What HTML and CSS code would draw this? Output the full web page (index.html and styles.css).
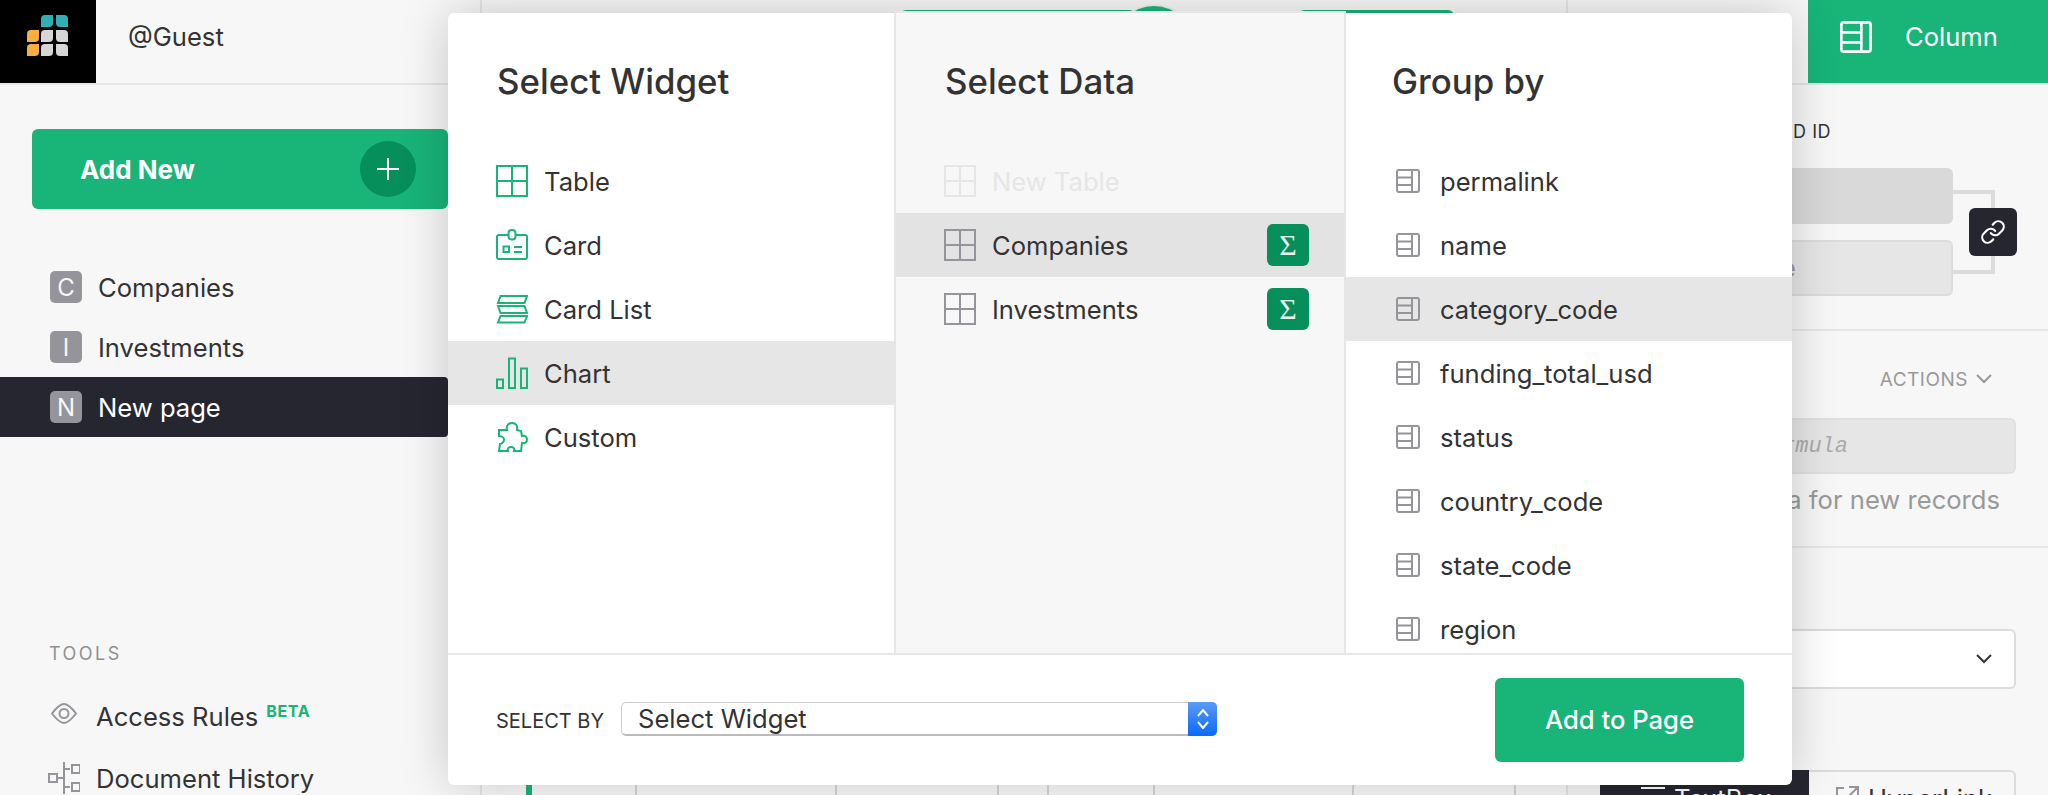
FILE: index.html
```html
<!DOCTYPE html>
<html lang="en">
<head>
  <meta charset="UTF-8">
  <title>New page - Add widget</title>
  <link rel="stylesheet" href="styles.css">
</head>
<body>
  <!-- icons used more than once -->
  <svg class="defs" width="0" height="0">
    <symbol id="i-table" viewBox="0 0 32 32"><path d="M1 1h30v30H1zM16 1v30M1 16h30" fill="none" stroke="currentColor" stroke-width="2"/></symbol>
    <symbol id="i-field" viewBox="0 0 24 24"><rect x="1" y="1" width="22" height="22" rx="2" fill="none" stroke="currentColor" stroke-width="2"/><path d="M16 1v22M1 8.500h15M1 16h15" fill="none" stroke="currentColor" stroke-width="2"/></symbol>
    <symbol id="i-chevron" viewBox="0 0 16 10"><path d="M1 1l7 7 7-7" fill="none" stroke="currentColor" stroke-width="2"/></symbol>
  </svg>

  <div class="app">
    <!-- left sidebar -->
    <aside class="sidebar">
      <div class="side-head">
        <div class="logo">
          <svg width="42" height="42" viewBox="0 0 42 42">
            <path d="M18 0h8v8a4 4 0 0 1-4 4h-8V4a4 4 0 0 1 4-4z" fill="#2fb0b4"/>
            <path d="M29 0h8a4 4 0 0 1 4 4v8h-8a4 4 0 0 1-4-4z" fill="#2fb0b4"/>
            <path d="M4 15h8v8a4 4 0 0 1-4 4H0v-8a4 4 0 0 1 4-4z" fill="#f9ae3f"/>
            <path d="M4 29h8v8a4 4 0 0 1-4 4H0v-8a4 4 0 0 1 4-4z" fill="#f9ae3f"/>
            <path d="M18 15h8v8a4 4 0 0 1-4 4h-8v-8a4 4 0 0 1 4-4z" fill="#d6d6d6"/>
            <path d="M29 15h8a4 4 0 0 1 4 4v8h-8a4 4 0 0 1-4-4z" fill="#d6d6d6"/>
            <path d="M18 29h8v8a4 4 0 0 1-4 4h-8v-8a4 4 0 0 1 4-4z" fill="#d6d6d6"/>
            <path d="M29 29h8a4 4 0 0 1 4 4v8h-8a4 4 0 0 1-4-4z" fill="#d6d6d6"/>
          </svg>
        </div>
        <span class="guest">@Guest</span>
      </div>

      <div class="add-new">
        <span>Add New</span>
        <span class="add-circle">
          <svg width="22" height="22" viewBox="0 0 22 22"><path d="M11 0v22M0 11h22" stroke="#fff" stroke-width="2"/></svg>
        </span>
      </div>

      <ul class="pages">
        <li class="page"><span class="page-badge">C</span>Companies</li>
        <li class="page"><span class="page-badge">I</span>Investments</li>
        <li class="page page-active"><span class="page-badge">N</span>New page</li>
      </ul>

      <div class="tools-label">TOOLS</div>
      <div class="tool">
        <span class="tool-icon tool-eye">
          <svg width="26" height="21" viewBox="0 0 26 21" fill="none" stroke="#94949a" stroke-width="2"><path d="M1 10.500C6 4 10 1 13 1s7 3 12 9.500C20 17 16 20 13 20s-7-3-12-9.500z"/><circle cx="13" cy="10.500" r="4.500"/></svg>
        </span>
        <span>Access Rules</span>
        <span class="beta">BETA</span>
      </div>
      <div class="tool">
        <span class="tool-icon">
          <svg width="32" height="32" viewBox="0 0 32 32" fill="none" stroke="#94949a" stroke-width="2"><path d="M1 12h8v8H1zM24 3h8v8h-8zM24 21h8v8h-8zM16 0v32M9 16h7M16 7h6M16 25h6"/></svg>
        </span>
        <span>Document History</span>
      </div>
    </aside>

    <!-- page canvas, mostly under the dialog -->
    <main class="canvas">
      <div class="canvas-top">
        <div class="green-btn green-btn-wide"></div>
        <div class="green-dot"></div>
        <div class="green-btn green-btn-small"></div>
      </div>
      <div class="grid-row">
        <div class="cell cell-a"><i class="cell-mark"></i></div>
        <div class="cell cell-b"></div>
        <div class="cell cell-c"></div>
        <div class="cell cell-d"></div>
        <div class="cell cell-e"></div>
        <div class="cell cell-f"></div>
        <div class="cell cell-g"></div>
        <div class="cell cell-h"></div>
      </div>
    </main>

    <!-- right panel -->
    <aside class="panel">
      <div class="panel-head">
        <div class="column-tab">
          <svg class="column-icon" width="32" height="32"><use href="#i-field"/></svg>
          Column
        </div>
      </div>

      <section class="panel-sec sec-fields">
        <div class="sec-label">RECORD ID</div>
        <div class="link-group">
          <div class="field field-filled"></div>
          <div class="field field-plain">Table name</div>
          <div class="link-lines"></div>
          <div class="link-btn">
            <svg width="26" height="26" viewBox="0 0 24 24" fill="none" stroke="#fff" stroke-width="2" stroke-linecap="round"><path d="M10 13a5 5 0 0 0 7.540.54l3-3a5 5 0 0 0-7.070-7.070l-1.720 1.710"/><path d="M14 11a5 5 0 0 0-7.540-.54l-3 3a5 5 0 0 0 7.070 7.070l1.710-1.710"/></svg>
          </div>
        </div>
      </section>

      <section class="panel-sec sec-formula">
        <div class="actions">ACTIONS <svg class="chev" width="16" height="10"><use href="#i-chevron"/></svg></div>
        <div class="formula">Enter formula</div>
        <div class="formula-note">Set formula for new records</div>
      </section>

      <section class="sec-bottom">
        <div class="panel-select"><svg class="chev-dark" width="16" height="10"><use href="#i-chevron"/></svg></div>
        <div class="tabs">
          <div class="tab tab-on"><i class="tab-dash"></i>TextBox</div>
          <div class="tab">
            <svg class="tab-link" width="24" height="24" viewBox="0 0 24 24" fill="none" stroke="#94949a" stroke-width="2"><path d="M9 2H2v20h20v-8M14 1h9v9M23 1L11 13"/></svg>
            HyperLink
          </div>
        </div>
      </section>
    </aside>
  </div>

  <!-- add widget dialog -->
  <div class="modal">
    <div class="modal-cols">
      <div class="col">
        <h2 class="col-title">Select Widget</h2>
        <ul class="rows">
          <li class="row">
            <svg class="wicon" width="32" height="32"><use href="#i-table"/></svg>Table
          </li>
          <li class="row">
            <svg class="wicon" width="32" height="32" viewBox="0 0 32 32" fill="none" stroke="currentColor" stroke-width="2"><path d="M12 6H3a2 2 0 0 0-2 2v20a2 2 0 0 0 2 2h26a2 2 0 0 0 2-2V8a2 2 0 0 0-2-2h-9"/><rect x="12.500" y="1" width="7" height="9.500" rx="3"/><path d="M7.500 17.500h5.500v5.500H7.500zM18 18h8M18 23h8"/></svg>Card
          </li>
          <li class="row">
            <svg class="wicon" width="32" height="32" viewBox="0 0 32 32" fill="none" stroke="currentColor" stroke-width="2"><path d="M4.500 3H31l-2.500 7H2zM2 13h26.500l2.500 7H4.500zM4.500 23H31l-2.500 6.500H2z"/></svg>Card List
          </li>
          <li class="row row-on">
            <svg class="wicon" width="32" height="32" viewBox="0 0 32 32" fill="none" stroke="currentColor" stroke-width="2"><path d="M1 22.500h6V31H1zM13 1.500h6V31h-6zM25 11.500h6V31h-6z"/></svg>Chart
          </li>
          <li class="row">
            <svg class="wicon" width="32" height="32" viewBox="0 0 32 32" fill="none" stroke="currentColor" stroke-width="2"><path d="M3 9h8c-1-4 1-7 5-7s6 3 5 7l4 1 1 5c3-1 5 1 5 3.500S29 23 26 22l-1 8h-7c1-3-1-4-3-4s-4 1-3 4H3l1-7c2 0 4-2 4-4.500S5 15 3 15z"/></svg>Custom
          </li>
        </ul>
      </div>

      <div class="col col-mid">
        <h2 class="col-title">Select Data</h2>
        <ul class="rows">
          <li class="row row-off">
            <svg class="dicon" width="32" height="32"><use href="#i-table"/></svg>New Table
          </li>
          <li class="row row-on-mid">
            <svg class="dicon" width="32" height="32"><use href="#i-table"/></svg>Companies
            <span class="sigma">Σ</span>
          </li>
          <li class="row">
            <svg class="dicon" width="32" height="32"><use href="#i-table"/></svg>Investments
            <span class="sigma">Σ</span>
          </li>
        </ul>
      </div>

      <div class="col col-last">
        <h2 class="col-title">Group by</h2>
        <ul class="rows">
          <li class="row"><svg class="ficon" width="24" height="24"><use href="#i-field"/></svg>permalink</li>
          <li class="row"><svg class="ficon" width="24" height="24"><use href="#i-field"/></svg>name</li>
          <li class="row row-on"><svg class="ficon" width="24" height="24"><use href="#i-field"/></svg>category_code</li>
          <li class="row"><svg class="ficon" width="24" height="24"><use href="#i-field"/></svg>funding_total_usd</li>
          <li class="row"><svg class="ficon" width="24" height="24"><use href="#i-field"/></svg>status</li>
          <li class="row"><svg class="ficon" width="24" height="24"><use href="#i-field"/></svg>country_code</li>
          <li class="row"><svg class="ficon" width="24" height="24"><use href="#i-field"/></svg>state_code</li>
          <li class="row"><svg class="ficon" width="24" height="24"><use href="#i-field"/></svg>region</li>
        </ul>
      </div>
    </div>

    <div class="modal-foot">
      <span class="select-label">SELECT BY</span>
      <div class="mac-select">
        <span class="mac-text">Select Widget</span>
        <span class="mac-arrows">
          <svg width="14" height="24" viewBox="0 0 14 24" fill="none" stroke="#fff" stroke-width="2"><path d="M2 9l5-6 5 6M2 15l5 6 5-6"/></svg>
        </span>
      </div>
      <div class="add-page">Add to Page</div>
    </div>
  </div>
</body>
</html>
```

FILE: styles.css
```css
* {
  margin: 0;
  padding: 0;
  box-sizing: border-box;
}

html, body {
  height: 795px;
  overflow: hidden;
}

body {
  position: relative;
  background: #f7f7f7;
  color: #333;
  font-family: Inter, "Noto Sans", sans-serif;
  font-size: 25.6px;
}

ul {
  list-style: none;
}

.defs {
  position: absolute;
}

.app {
  display: flex;
  height: 795px;
}

/* sidebar */
.sidebar {
  flex: 0 0 482px;
  border-right: 2px solid #e6e6e6;
  padding-right: 32px;
  overflow: hidden;
}

.side-head {
  display: flex;
  align-items: center;
  height: 85px;
  margin-right: -32px;
  border-bottom: 2px solid #e6e6e6;
}

.logo {
  display: flex;
  align-items: center;
  justify-content: center;
  width: 96px;
  height: 83px;
  padding-bottom: 11px;
  background: #000;
}

.guest {
  margin: -10px 0 0 32px;
}

.add-new {
  display: flex;
  align-items: center;
  justify-content: space-between;
  height: 80px;
  margin: 44px 0 48px 32px;
  padding: 0 32px 0 48px;
  background: #18b478;
  border-radius: 6px;
  color: #fff;
  font-size: 26px;
  font-weight: 700;
}

.add-circle {
  display: flex;
  align-items: center;
  justify-content: center;
  width: 56px;
  height: 56px;
  background: #068f5a;
  border-radius: 50%;
}

.page {
  display: flex;
  align-items: center;
  height: 60px;
  padding-left: 50px;
}

.page-active {
  background: #262631;
  border-radius: 0 4px 4px 0;
  color: #fff;
}

.page-badge {
  display: flex;
  align-items: center;
  justify-content: center;
  width: 32px;
  height: 32px;
  margin-right: 16px;
  background: #94949a;
  border-radius: 5px;
  color: #f7f7f7;
  font-size: 24px;
}

.tools-label {
  margin: 206px 0 20px 49px;
  color: #909090;
  font-size: 18px;
  letter-spacing: 2.500px;
  line-height: 22px;
}

.tool {
  display: flex;
  align-items: center;
  height: 62px;
  padding-left: 48px;
  white-space: nowrap;
}

.tool-icon {
  display: flex;
  justify-content: center;
  width: 32px;
  margin-right: 16px;
}

.tool-eye {
  margin-top: -6px;
}

.beta {
  margin: -10px 0 0 8px;
  color: #18b478;
  font-size: 16px;
  font-weight: 700;
  letter-spacing: .6px;
}

/* canvas */
.canvas {
  flex: 1;
  display: flex;
  flex-direction: column;
  justify-content: space-between;
}

.canvas-top {
  display: flex;
  align-items: flex-start;
  padding: 6px 0 0 418px;
}

.green-btn {
  height: 50px;
  margin-top: 4px;
  background: #18b478;
  border-radius: 6px;
}

.green-btn-wide {
  width: 236px;
}

.green-btn-small {
  width: 156px;
  margin-left: 104px;
}

.green-dot {
  width: 80px;
  height: 80px;
  margin-left: -22px;
  background: #18b478;
  border-radius: 50%;
  box-shadow: 0 0 0 2px #f0f0f0;
}

.grid-row {
  display: flex;
  height: 60px;
}

.cell {
  background: #fafafa;
  border-right: 2px solid #d6d6d6;
}

.cell-a { width: 155px; padding-left: 44px; }
.cell-b { width: 200px; }
.cell-c { width: 162px; }
.cell-d { width: 50px; }
.cell-e { width: 106px; }
.cell-f { width: 199px; }
.cell-g { width: 162px; }
.cell-h { width: 50px; border-right: 0; }

.cell-mark {
  display: block;
  width: 6px;
  height: 100%;
  background: #18b478;
}

/* right panel */
.panel {
  flex: 0 0 482px;
  border-left: 2px solid #e6e6e6;
}

.panel-head {
  display: flex;
  justify-content: flex-end;
  height: 85px;
  border-bottom: 2px solid #e6e6e6;
}

.column-tab {
  display: flex;
  align-items: center;
  width: 240px;
  padding: 0 0 10px 32px;
  background: #18b478;
  color: #fff;
}

.column-icon {
  margin-right: 33px;
}

.panel-sec {
  border-bottom: 2px solid #e6e6e6;
}

.sec-fields {
  height: 246px;
  padding: 36px 32px 0;
}

.sec-label {
  width: 231px;
  font-size: 18px;
  letter-spacing: .5px;
  line-height: 22px;
  text-align: right;
  white-space: nowrap;
}

.link-group {
  position: relative;
  margin-top: 25px;
}

.field {
  width: 353px;
  height: 56px;
  border-radius: 6px;
}

.field-filled {
  background: #d9d9d9;
}

.field-plain {
  margin-top: 16px;
  padding-right: 155px;
  background: #e6e6e6;
  border: 2px solid #dcdcdc;
  color: #999;
  line-height: 52px;
  text-align: right;
}

.link-lines {
  position: absolute;
  left: 353px;
  top: 22px;
  width: 42px;
  height: 84px;
  border: 4px solid #dcdcdc;
  border-left: 0;
}

.link-btn {
  position: absolute;
  left: 369px;
  top: 40px;
  display: flex;
  align-items: center;
  justify-content: center;
  width: 48px;
  height: 48px;
  background: #262631;
  border-radius: 6px;
}

.sec-formula {
  height: 217px;
  padding: 36px 32px 0;
}

.actions {
  display: flex;
  align-items: center;
  justify-content: flex-end;
  gap: 8px;
  height: 24px;
  margin-right: 24px;
  color: #999;
  font-size: 19px;
  letter-spacing: .5px;
}

.chev {
  color: #999;
}

.formula {
  height: 56px;
  margin-top: 27px;
  padding-right: 166px;
  background: #e6e6e6;
  border: 2px solid #e0e0e0;
  border-radius: 6px;
  color: #aaa;
  font-family: "Liberation Mono", monospace;
  font-size: 22px;
  font-style: italic;
  line-height: 54px;
  text-align: right;
  white-space: nowrap;
}

.formula-note {
  margin-top: 10px;
  padding-right: 16px;
  color: #999;
  line-height: 32px;
  text-align: right;
  white-space: nowrap;
}

.sec-bottom {
  padding: 81px 32px 0;
}

.panel-select {
  display: flex;
  align-items: center;
  justify-content: flex-end;
  height: 60px;
  padding-right: 22px;
  background: #fff;
  border: 2px solid #dcdcdc;
  border-radius: 6px;
}

.chev-dark {
  color: #333;
}

.tabs {
  display: flex;
  margin-top: 81px;
}

.tab {
  display: flex;
  align-items: center;
  flex: 0 0 207px;
  height: 56px;
  padding-left: 26px;
  border: 2px solid #dcdcdc;
  border-left: 0;
  border-radius: 0 6px 0 0;
  white-space: nowrap;
}

.tab-on {
  flex-basis: 209px;
  padding-left: 41px;
  background: #262631;
  border: 0;
  border-radius: 0;
  color: #fff;
}

.tab-dash {
  width: 24px;
  height: 2px;
  margin: -20px 9px 0 0;
  background: #fff;
}

.tab-link {
  margin-right: 9px;
}

/* dialog */
.modal {
  position: absolute;
  left: 448px;
  top: 13px;
  width: 1344px;
  height: 772px;
  background: #fff;
  border-radius: 6px;
  box-shadow: 0 0 50px rgba(0, 0, 0, .2);
}

.modal-cols {
  display: flex;
  height: 642px;
  border-bottom: 2px solid #e6e6e6;
}

.col {
  flex: 0 0 446px;
  overflow: hidden;
}

.col-mid {
  flex: 0 0 452px;
  height: 642px;
  margin-top: -2px;
  background: #f7f7f7;
  border: 2px solid #e6e6e6;
  border-bottom: 0;
}

.col-last {
  flex: 1;
}

.col-title {
  height: 136px;
  padding: 46px 0 0 49px;
  font-size: 34.800px;
  font-weight: 500;
  line-height: 44px;
}

.col-last .col-title {
  padding-left: 46px;
}

.row {
  display: flex;
  align-items: center;
  height: 64px;
  padding-left: 48px;
}

.col-last .row {
  padding-left: 47px;
}

.row-on {
  background: #e6e6e6;
}

.row-on-mid {
  background: #e3e3e3;
}

.row-off {
  color: #e6e6e6;
}

.wicon {
  margin-right: 16px;
  color: #18b478;
}

.dicon {
  margin-right: 16px;
  color: #94949a;
}

.row-off .dicon {
  color: #e6e6e6;
}

.ficon {
  margin: 0 20px 0 3px;
  color: #94949a;
}

.sigma {
  display: flex;
  align-items: center;
  justify-content: center;
  width: 42px;
  height: 42px;
  margin: 0 35px 0 auto;
  background: #068f5a;
  border-radius: 6px;
  color: #e6f2ec;
  font-family: "Liberation Serif", serif;
  font-size: 30px;
}

.modal-foot {
  display: flex;
  align-items: center;
  height: 130px;
  padding: 0 48px;
}

.select-label {
  width: 125px;
  margin-top: 2px;
  font-size: 20px;
  white-space: nowrap;
}

.mac-select {
  display: flex;
  width: 596px;
  height: 34px;
  margin-top: -2px;
  background: #fff;
  border: 1px solid #ccc;
  border-bottom: 2px solid #bbb;
  border-radius: 5px;
}

.mac-text {
  flex: 1;
  padding-left: 16px;
  line-height: 31px;
}

.mac-arrows {
  display: flex;
  align-items: center;
  justify-content: center;
  width: 29px;
  margin: -1px -1px -2px 0;
  background: linear-gradient(#5a9bf5, #0a69fb);
  border-radius: 0 5px 5px 0;
}

.add-page {
  width: 249px;
  height: 84px;
  margin-left: auto;
  background: #18b478;
  border-radius: 6px;
  color: #fff;
  line-height: 84px;
  font-weight: 500;
  text-align: center;
}
```
